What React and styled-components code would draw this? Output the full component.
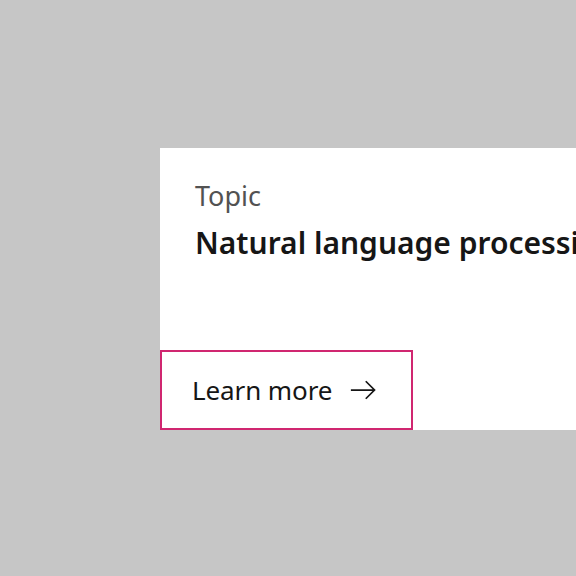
import React from "react";
import styled, { createGlobalStyle } from "styled-components";

const Global = createGlobalStyle`
  html, body {
    margin: 0;
    padding: 0;
    background: #c6c6c6;
    font-family: "Noto Sans", "Open Sans", sans-serif;
  }
`;

const Page = styled.div`
  width: 576px;
  height: 576px;
  overflow: hidden;
  padding: 148px 0 0 160px;
  box-sizing: border-box;
`;

const Card = styled.div`
  width: 520px;
  height: 282px;
  background: #ffffff;
  display: flex;
  flex-direction: column;
  justify-content: space-between;
`;

const Body = styled.div`
  padding: 29px 0 0 35px;
`;

const Eyebrow = styled.div`
  font-size: 27px;
  line-height: 38px;
  color: #525252;
`;

const Title = styled.div`
  margin-top: 8px;
  font-size: 30px;
  line-height: 40px;
  font-weight: 600;
  color: #161616;
  white-space: nowrap;
`;

const LinkButton = styled.a`
  width: 253px;
  height: 80px;
  box-sizing: border-box;
  border: 2px solid #d02670;
  display: flex;
  align-items: center;
  justify-content: space-between;
  padding: 0 33px 0 30px;
  font-size: 26px;
  letter-spacing: -0.1px;
  color: #161616;
  text-decoration: none;
`;

function Arrow() {
  return (
    <svg width="28" height="28" viewBox="0 0 32 32" fill="none">
      <path d="M1 16h27M18 6l10 10-10 10" stroke="#161616" strokeWidth="2" />
    </svg>
  );
}

export default function App() {
  return (
    <>
      <Global />
      <Page>
        <Card>
          <Body>
            <Eyebrow>Topic</Eyebrow>
            <Title>Natural language processing</Title>
          </Body>
          <LinkButton href="#">
            Learn more
            <Arrow />
          </LinkButton>
        </Card>
      </Page>
    </>
  );
}
